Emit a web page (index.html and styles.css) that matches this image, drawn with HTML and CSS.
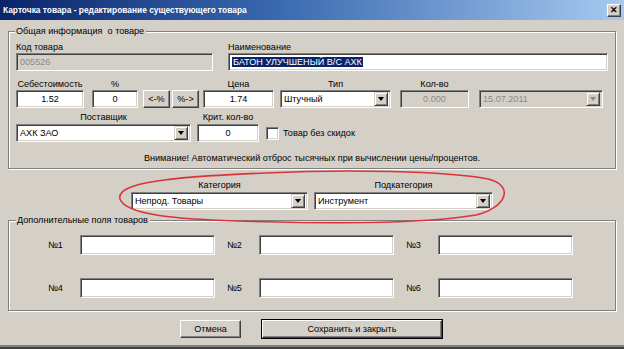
FILE: index.html
```html
<!DOCTYPE html>
<html lang="ru">
  <head>
    <meta charset="UTF-8" />
    <title>Карточка товара</title>
    <link rel="stylesheet" href="styles.css">
  </head>
  <body>
    <div class="window">
      <div class="titlebar">
        <span class="title">Карточка товара - редактирование существующего товара</span>
        <span class="close">&#x2715;</span>
      </div>
      <div class="client">
        <div class="group main-info">
          <div class="group-title">Общая информация&nbsp; о товаре</div>
          <div class="row row-top">
            <div class="field w-code left">
              <label>Код товара</label>
              <div class="edit disabled">005526</div>
            </div>
            <div class="field w-name left">
              <label>Наименование</label>
              <div class="edit"><span class="selected">БАТОН УЛУЧШЕНЫЙ В/С АХК</span></div>
            </div>
          </div>
          <div class="row row-price">
            <div class="field w-cost">
              <label>Себестоимость</label>
              <div class="edit center">1.52</div>
            </div>
            <div class="field w-pct">
              <label>%</label>
              <div class="edit center">0</div>
            </div>
            <div class="field w-btn">
              <label></label>
              <div class="btn">&lt;-%</div>
            </div>
            <div class="field w-btn2">
              <label></label>
              <div class="btn">%-&gt;</div>
            </div>
            <div class="field w-price">
              <label>Цена</label>
              <div class="edit center">1.74</div>
            </div>
            <div class="field w-type">
              <label>Тип</label>
              <div class="combo"><span class="combo-text">Штучный</span><span class="drop"></span></div>
            </div>
            <div class="field w-qty">
              <label>Кол-во</label>
              <div class="edit center disabled">0.000</div>
            </div>
            <div class="field w-date">
              <label></label>
              <div class="combo disabled"><span class="combo-text">15.07.2011</span><span class="drop"></span></div>
            </div>
          </div>
          <div class="row row-supplier">
            <div class="field w-supplier">
              <label>Поставщик</label>
              <div class="combo"><span class="combo-text">АХК ЗАО</span><span class="drop"></span></div>
            </div>
            <div class="field w-crit">
              <label>Крит. кол-во</label>
              <div class="edit center">0</div>
            </div>
            <div class="check">
              <span class="check-box"></span>
              <span>Товар без скидок</span>
            </div>
          </div>
          <div class="warning">Внимание! Автоматический отброс тысячных при вычислении цены/процентов.</div>
        </div>

        <div class="row row-category">
          <div class="field w-cat">
            <label>Категория</label>
            <div class="combo"><span class="combo-text">Непрод. Товары</span><span class="drop"></span></div>
          </div>
          <div class="field w-subcat">
            <label>Подкатегория</label>
            <div class="combo"><span class="combo-text">Инструмент</span><span class="drop"></span></div>
          </div>
        </div>

        <div class="group extra">
          <div class="group-title">Дополнительные поля товаров</div>
          <div class="extra-grid">
            <span class="num">№1</span><div class="edit tall"></div>
            <span class="num">№2</span><div class="edit tall"></div>
            <span class="num">№3</span><div class="edit tall"></div>
            <span class="num">№4</span><div class="edit tall"></div>
            <span class="num">№5</span><div class="edit tall"></div>
            <span class="num">№6</span><div class="edit tall"></div>
          </div>
        </div>

        <div class="actions">
          <div class="btn btn-cancel">Отмена</div>
          <div class="btn btn-save">Сохранить и закрыть</div>
        </div>
      </div>
      <div class="bottom-edge"></div>

      <svg class="mark" width="400" height="58" viewBox="0 0 400 58">
        <path d="M150 4 C230 0 330 2 372 10 C398 16 392 38 360 46 C300 56 200 54 120 52 C60 50 10 46 4 30 C0 14 50 8 150 4 Z"
              fill="none" stroke="#d8343a" stroke-width="1.6" />
      </svg>
    </div>
  </body>
</html>
```

FILE: styles.css
```css
html,
body {
  margin: 0;
  padding: 0;
}
body {
  width: 624px;
  height: 349px;
  overflow: hidden;
  background-color: #d4d0c8;
  font-family: "Liberation Sans", Arial, sans-serif;
  font-size: 9.1px;
  color: #000;
}
.window {
  position: relative;
  height: 349px;
  display: flex;
  flex-direction: column;
}
.titlebar {
  height: 20px;
  display: flex;
  align-items: center;
  justify-content: space-between;
  padding: 0 3px 0 3px;
  background: linear-gradient(to right, #0a246a 0%, #3a6ab0 45%, #a6caf0 100%);
}
.title {
  color: #fff;
  font-weight: bold;
  font-size: 8.4px;
}
.close {
  width: 14px;
  height: 13px;
  margin-top: 1px;
  background-color: #d4d0c8;
  border: 1px solid;
  border-color: #fff #404040 #404040 #fff;
  box-shadow: inset -1px -1px #808080;
  box-sizing: border-box;
  font-size: 9px;
  font-weight: bold;
  line-height: 11px;
  text-align: center;
}
.client {
  flex: 1;
  padding: 11px 8px 0 8px;
}

/* group boxes */
.group {
  border: 1px solid #808080;
  box-shadow: inset 1px 1px #fff, 1px 1px #fff;
}
.group-title {
  width: fit-content;
  margin: -7px 0 0 6px;
  padding: 0 2px 0 1px;
  line-height: 12px;
  background-color: #d4d0c8;
}
.main-info {
  height: 136px;
  padding: 0 0 0 7px;
}
.main-info .group-title {
  margin-left: -1px;
}

.row {
  display: flex;
  align-items: flex-end;
}
.field {
  display: flex;
  flex-direction: column;
}
.field label {
  display: block;
  height: 12px;
  line-height: 12px;
  text-align: center;
  white-space: nowrap;
}
.field.left label {
  text-align: left;
}

/* sunken edit */
.edit,
.combo {
  height: 18px;
  box-sizing: border-box;
  border: 1px solid;
  border-color: #808080 #fff #fff #808080;
  box-shadow: inset 1px 1px #404040, inset -1px -1px #d4d0c8;
  background-color: #fff;
  padding: 0 3px;
  line-height: 16px;
  white-space: nowrap;
  overflow: hidden;
}
.edit.center {
  text-align: center;
}
.edit.disabled,
.combo.disabled {
  background-color: #d4d0c8;
  color: #8a8a8a;
}
.selected {
  background-color: #0a246a;
  color: #fff;
  padding: 0 1px;
}

.combo {
  display: flex;
  align-items: center;
  padding: 0 2px 0 3px;
}
.combo-text {
  flex: 1;
}
.drop {
  width: 14px;
  height: 14px;
  box-sizing: border-box;
  border: 1px solid;
  border-color: #d4d0c8 #404040 #404040 #d4d0c8;
  box-shadow: inset 1px 1px #fff, inset -1px -1px #808080;
  background-color: #d4d0c8;
  display: flex;
  align-items: center;
  justify-content: center;
}
.drop::after {
  content: "";
  border-left: 3.5px solid transparent;
  border-right: 3.5px solid transparent;
  border-top: 4px solid #000;
}
.combo.disabled .drop::after {
  border-top-color: #8a8a8a;
}

/* raised button */
.btn {
  height: 18px;
  box-sizing: border-box;
  border: 1px solid;
  border-color: #fff #404040 #404040 #fff;
  box-shadow: inset -1px -1px #808080;
  background-color: #d4d0c8;
  text-align: center;
  line-height: 16px;
}

/* first group rows */
.row-top {
  margin-top: 4px;
}
.w-code {
  width: 197px;
}
.w-name {
  width: 380px;
  margin-left: 15px;
}
.row-price {
  margin-top: 7px;
}
.w-cost {
  width: 68px;
}
.w-pct {
  width: 46px;
  margin-left: 8px;
}
.w-btn {
  width: 27px;
  margin-left: 5px;
}
.w-btn2 {
  width: 27px;
  margin-left: 2px;
}
.w-price {
  width: 71px;
  margin-left: 4px;
}
.w-type {
  width: 111px;
  margin-left: 6px;
}
.w-qty {
  width: 69px;
  margin-left: 9px;
}
.w-date {
  width: 124px;
  margin-left: 10px;
}
.row-supplier {
  margin-top: 3px;
}
.row-supplier .field label {
  height: 13px;
}
.w-supplier {
  width: 175px;
}
.w-crit {
  width: 62px;
  margin-left: 6px;
}
.check {
  display: flex;
  align-items: center;
  height: 18px;
  margin-left: 7px;
}
.check-box {
  width: 13px;
  height: 13px;
  box-sizing: border-box;
  margin-right: 4px;
  border: 1px solid;
  border-color: #808080 #fff #fff #808080;
  box-shadow: inset 1px 1px #404040, inset -1px -1px #d4d0c8;
  background-color: #fff;
}
.warning {
  margin-top: 10px;
  margin-left: -7px;
  line-height: 12px;
  text-align: center;
}

/* category row */
.row-category {
  margin-top: 10px;
  padding-left: 123px;
}
.row-category .field label {
  height: 13px;
  line-height: 12px;
}
.w-cat {
  width: 177px;
}
.w-subcat {
  width: 179px;
  margin-left: 6px;
}

/* extra fields */
.extra {
  margin-top: 10px;
  height: 89px;
  padding: 0 0 0 39px;
}
.extra .group-title {
  margin-left: -32px;
}
.extra-grid {
  display: grid;
  grid-template-columns: 32px 135px 44px 135px 44px 135px;
  row-gap: 23px;
  margin-top: 9px;
}
.extra-grid .num:nth-child(3),
.extra-grid .num:nth-child(5),
.extra-grid .num:nth-child(9),
.extra-grid .num:nth-child(11) {
  margin-left: 12px;
}
.num {
  line-height: 20px;
}
.edit.tall {
  height: 20px;
}

/* buttons */
.actions {
  display: flex;
  margin-top: 9px;
  padding-left: 172px;
  gap: 21px;
}
.btn-cancel {
  width: 61px;
}
.btn-save {
  width: 180px;
  outline: 1px solid #000;
}

.bottom-edge {
  height: 4px;
  background-color: #808080;
  border-top: 1px solid #d4d0c8;
  box-shadow: inset 0 -2px #404040;
}

/* red hand-drawn mark over the category row */
.mark {
  position: absolute;
  left: 116px;
  top: 169px;
}
```
